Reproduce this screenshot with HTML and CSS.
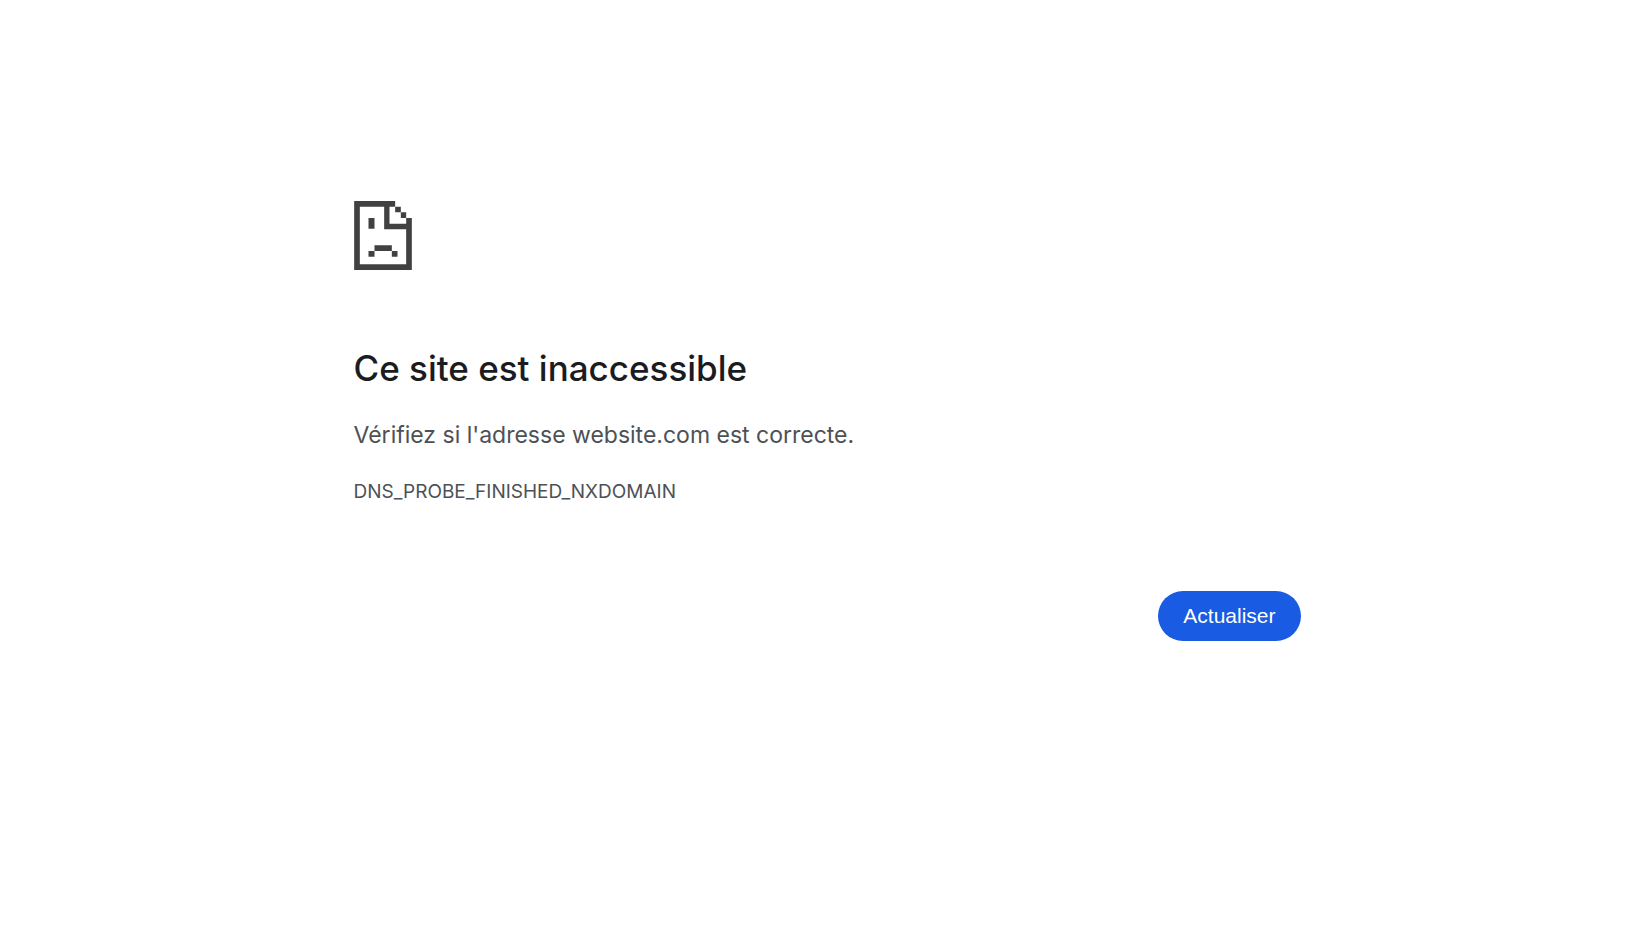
FILE: index.html
```html
<!DOCTYPE html>
<html lang="fr">
<head>
    <meta charset="UTF-8">
    <meta name="viewport" content="width=device-width, initial-scale=1.0">
    <title>website.com</title>
    <link rel="stylesheet" href="styles.css">
</head>
<body>
    <main class="error-page">
        <svg class="icon" viewBox="0 0 173 207" aria-hidden="true">
            <!-- page outline -->
            <path d="M0 0H123V17H106V68H156V51H173V207H0ZM17 17V190H156V85H90V17Z" fill-rule="evenodd"/>
            <!-- folded corner -->
            <path d="M123 17H140V34H123ZM140 34H156V51H140Z"/>
            <!-- sad face -->
            <path d="M43 51H61V83H43ZM61 133H113V150H61ZM43 150H61V167H43ZM113 150H130V167H113Z"/>
        </svg>
        <h1>Ce site est inaccessible</h1>
        <p class="message">Vérifiez si l'adresse website.com est correcte.</p>
        <div class="error-code">DNS_PROBE_FINISHED_NXDOMAIN</div>
        <div class="buttons">
            <button type="button" onclick="location.reload()">Actualiser</button>
        </div>
    </main>
</body>
</html>
```

FILE: styles.css
```css
body {
    margin: 0;
    padding: 0 0 0 8px;
    background-color: #fff;
    color: #4d5156;
    font-family: Inter, "Liberation Sans", sans-serif;
}
.error-page {
    max-width: 947px;
    margin: 0 auto;
    padding-top: 201px;
}
.icon {
    display: block;
    width: 58px;
    height: 69px;
    fill: #414141;
}
h1 {
    margin: 74px 0 28px;
    color: #1b1c1f;
    font-size: 35px;
    font-weight: 500;
    line-height: 48px;
}
.message {
    margin: 0 0 28px;
    font-size: 23px;
    line-height: 30px;
}
.error-code {
    font-size: 19px;
    line-height: 28px;
}
.buttons {
    display: flex;
    justify-content: flex-end;
    margin-top: 85px;
}
button {
    padding: 0 25px;
    border: 0;
    border-radius: 25px;
    background: #195be2;
    color: #fff;
    font-family: "Liberation Sans", Arial, sans-serif;
    font-size: 21px;
    line-height: 50px;
    cursor: pointer;
}
button:hover {
    background: #0b4ccb;
}
```
